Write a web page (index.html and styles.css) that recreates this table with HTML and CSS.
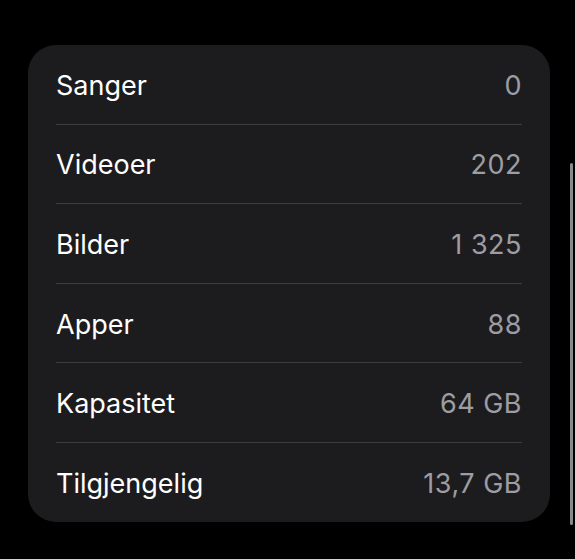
FILE: index.html
```html
<!DOCTYPE html>
<html lang="nb">
<head>
  <meta charset="UTF-8">
  <meta name="viewport" content="width=device-width, initial-scale=1.0">
  <title>Om</title>
  <link rel="stylesheet" href="styles.css">
</head>
<body>

<!-- Info list -->
<div id="info-card">
  <div class="info-row"><span class="info-label">Sanger</span><span class="info-value">0</span></div>
  <div class="info-row"><span class="info-label">Videoer</span><span class="info-value">202</span></div>
  <div class="info-row"><span class="info-label">Bilder</span><span class="info-value">1 325</span></div>
  <div class="info-row"><span class="info-label">Apper</span><span class="info-value">88</span></div>
  <div class="info-row"><span class="info-label">Kapasitet</span><span class="info-value">64 GB</span></div>
  <div class="info-row"><span class="info-label">Tilgjengelig</span><span class="info-value">13,7 GB</span></div>
</div>

<!-- Scroll indicator -->
<div id="scroll-indicator"></div>

</body>
</html>
```

FILE: styles.css
```css
body {
  font-family: Inter, "Noto Sans", sans-serif;
  margin: 0;
  padding: 45px 25px 0 28px;
  background-color: #000;
  height: 559px;
  box-sizing: border-box;
  overflow: hidden;
  position: relative;
}

#info-card {
  width: 522px;
  background-color: #1c1c1e;
  border-radius: 28px;
  overflow: hidden;
}

.info-row {
  display: flex;
  justify-content: space-between;
  align-items: center;
  height: 79.6px;
  padding-top: 2px;
  box-sizing: border-box;
  margin: 0 28px;
  border-bottom: 1px solid #3d3d40;
  font-size: 27px;
}

.info-row:last-child {
  border-bottom: none;
  height: 79px;
}

.info-label {
  color: #fff;
}

.info-value {
  color: #9d9da3;
  letter-spacing: 0.5px;
}

#scroll-indicator {
  position: absolute;
  top: 163px;
  left: 570px;
  width: 3px;
  height: 362px;
  border-radius: 2px;
  background-color: #8a8a8c;
}
```
